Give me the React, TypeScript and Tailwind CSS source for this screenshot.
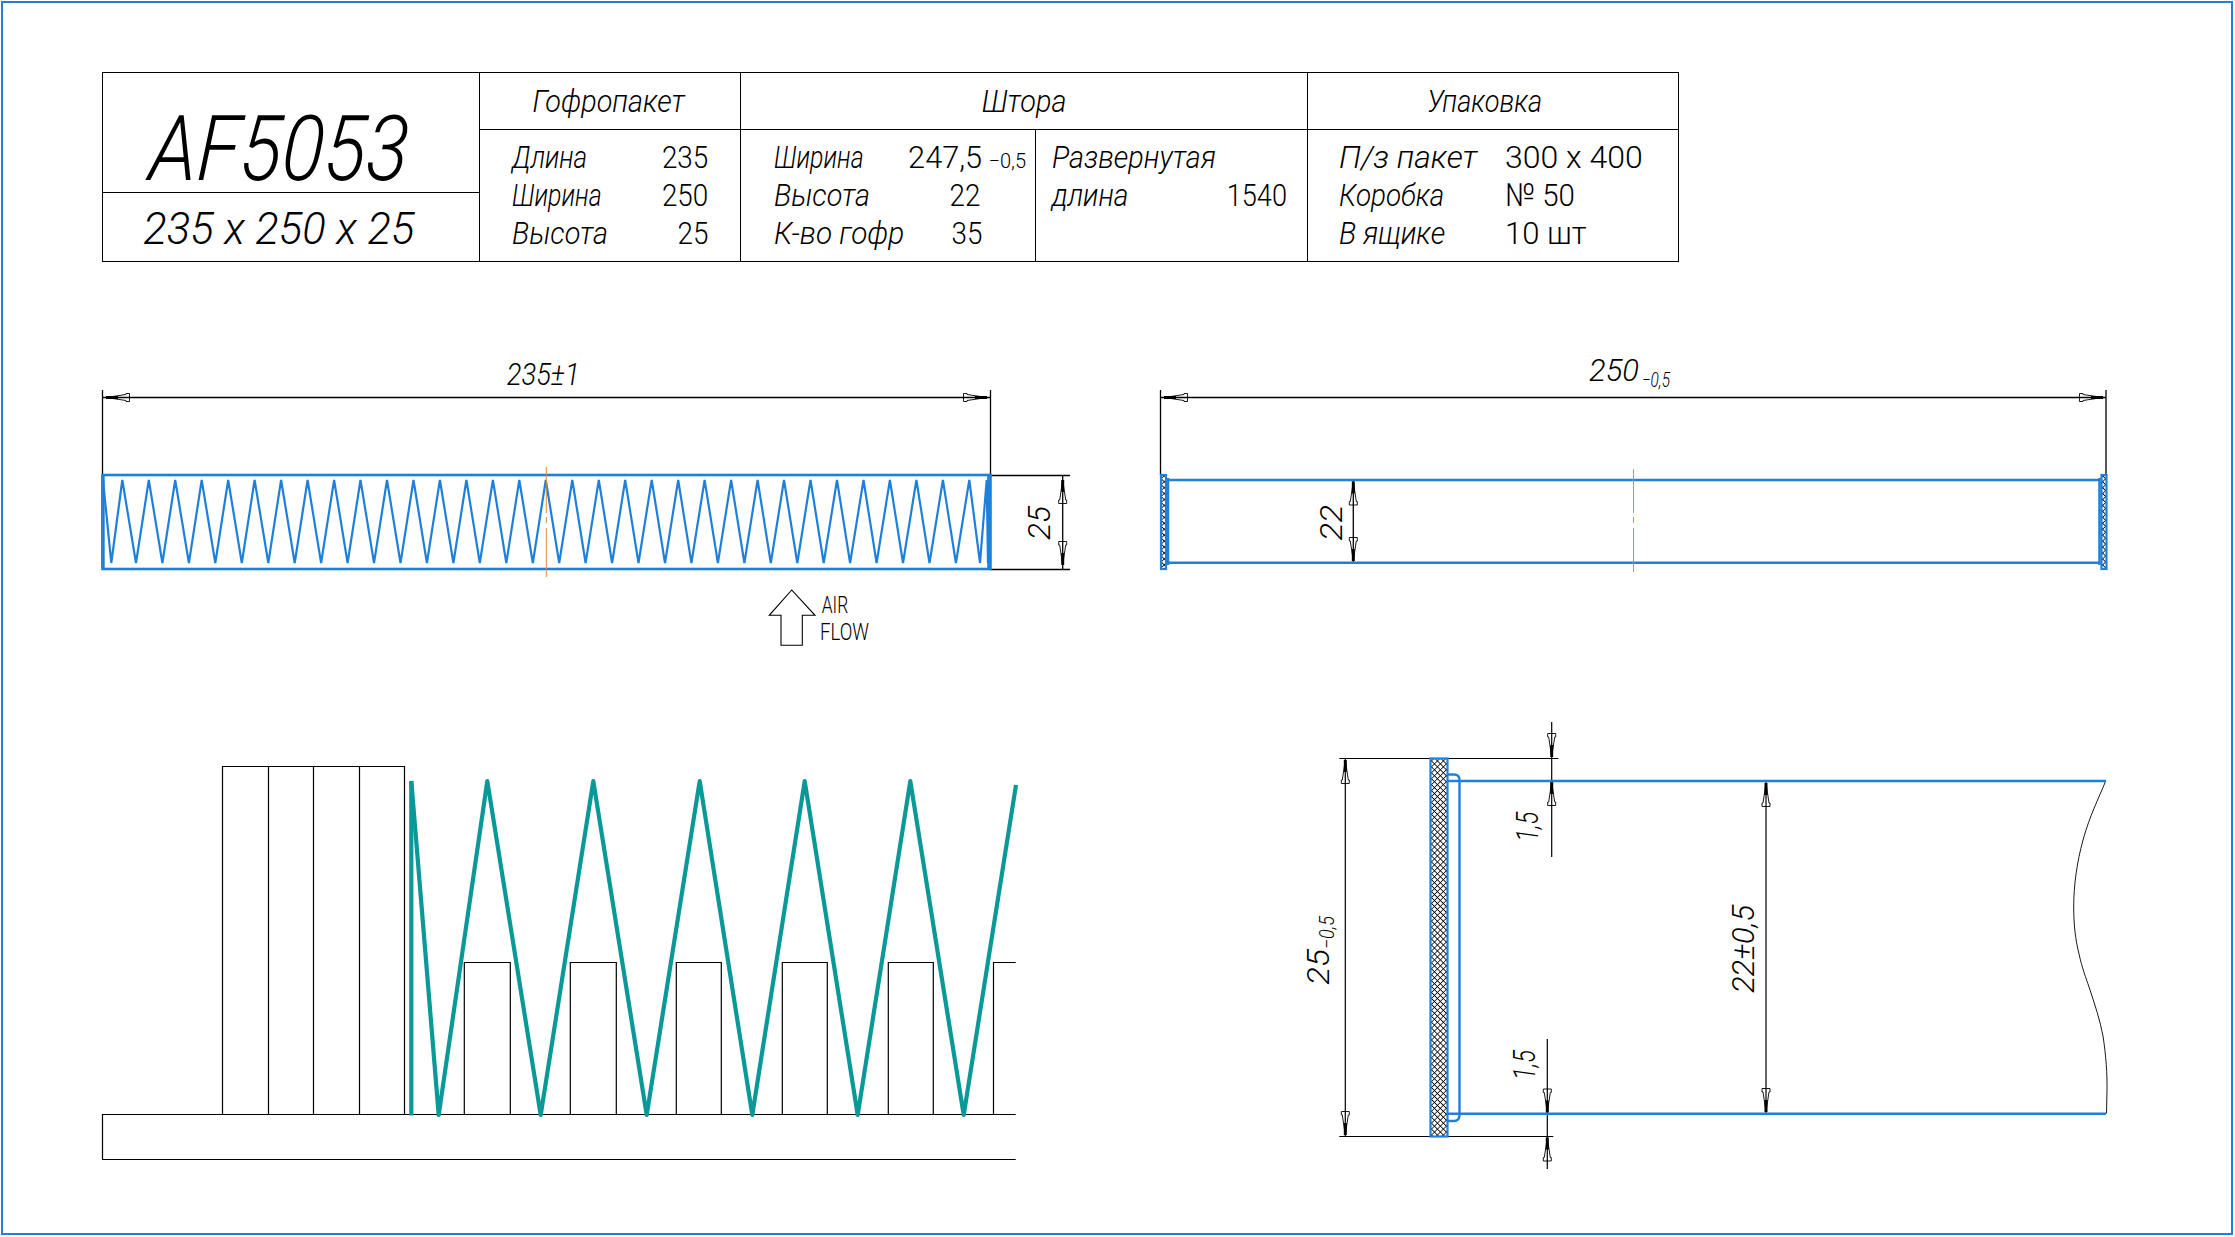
import React from "react";

const BLUE = "#1e80da";
const TEAL = "#0a9898";
const ORANGE = "#e08a3c";
const FONT = "Roboto, 'Noto Sans', sans-serif";

function Arrow({ x, y, angle }: { x: number; y: number; angle: number }) {
  return (
    <g transform={`translate(${x} ${y}) rotate(${angle})`}>
      <path d="M0 0 L20 -3 L20 -4 L23.5 -4 L23.5 4 L20 4 L20 3 Z" fill="none" stroke="#000" strokeWidth="0.9" />
      <path d="M0 0 L12 0" stroke="#000" strokeWidth="3" />
    </g>
  );
}

function T({
  x,
  y,
  len,
  size = 32,
  rot = false,
  italic = true,
  weight = 300,
  children,
}: {
  x: number;
  y: number;
  len: number;
  size?: number;
  rot?: boolean;
  italic?: boolean;
  weight?: number;
  children: React.ReactNode;
}) {
  return (
    <text
      x={x}
      y={y}
      fontFamily={FONT}
      fontSize={size}
      fontWeight={weight}
      fontStyle={italic ? "italic" : "normal"}
      textLength={len}
      lengthAdjust="spacingAndGlyphs"
      fill="#000"
      transform={rot ? `rotate(-90 ${x} ${y})` : undefined}
    >
      {children}
    </text>
  );
}

function Hatch({ id }: { id: string }) {
  return (
    <pattern id={id} width="4.2" height="4.2" patternUnits="userSpaceOnUse" patternTransform="rotate(45)">
      <rect width="4.2" height="4.2" fill="#fff" />
      <path d="M0 0H4.2M0 0V4.2" stroke="#000" strokeWidth="1.5" />
    </pattern>
  );
}

const peaks = Array.from({ length: 33 }, (_, k) => 122.3 + 26.47 * k);
const valleys = Array.from({ length: 32 }, (_, k) => 136 + 26.45 * k);

function zigzagPoints() {
  const pts: string[] = ["103,480", "111.3,563"];
  for (let k = 0; k < 33; k++) {
    pts.push(`${peaks[k].toFixed(1)},480`);
    if (k < 32) pts.push(`${valleys[k].toFixed(1)},563`);
  }
  pts.push("980,563", "986.7,480", "988,563");
  return pts.join(" ");
}

function TopLeftDrawing() {
  return (
    <svg viewBox="90 350 1000 310" width="1000" height="310" className="block shrink-0">
      <g stroke="#000" strokeWidth="1.3" fill="none">
        <path d="M102.5 390V475M990.5 390V475M102.5 397.5H990.5" />
        <path d="M990 475.5H1070M990 569.5H1070M1062.7 475.5V569.5" />
      </g>
      <Arrow x={106} y={397.5} angle={0} />
      <Arrow x={987} y={397.5} angle={180} />
      <Arrow x={1062.7} y={480} angle={90} />
      <Arrow x={1062.7} y={565} angle={-90} />
      <T x={506.7} y={385} len={73}>235±1</T>
      <T x={1050} y={540} len={34} rot>25</T>
      <polyline points={zigzagPoints()} fill="none" stroke={BLUE} strokeWidth="2.2" />
      <rect x="102.5" y="475" width="888" height="94" fill="none" stroke={BLUE} strokeWidth="2.6" />
      <path d="M103 476V568" stroke={BLUE} strokeWidth="3.4" />
      <path d="M989 476V568" stroke={BLUE} strokeWidth="3.6" />
      <path d="M546.3 467V513M546.3 517V523M546.3 528V577" stroke={ORANGE} strokeWidth="1" />
      <path
        d="M791.7 590L769.3 615.3H781V645.3H802.3V615.3H815Z"
        fill="#fff"
        stroke="#000"
        strokeWidth="1.1"
      />
      <T x={821.7} y={613.3} len={26.5} size={23} italic={false}>AIR</T>
      <T x={820} y={640} len={49} size={23} italic={false}>FLOW</T>
    </svg>
  );
}

function TopRightDrawing() {
  return (
    <svg viewBox="1130 350 1000 310" width="1000" height="310" className="block shrink-0">
      <defs>
        <Hatch id="hatch-a" />
      </defs>
      <g stroke="#000" strokeWidth="1.3" fill="none">
        <path d="M1160.5 390V475M2106 390V475M1160.5 397.5H2106" />
        <path d="M1353.3 480V563" />
      </g>
      <Arrow x={1164} y={397.5} angle={0} />
      <Arrow x={2103} y={397.5} angle={180} />
      <Arrow x={1353.3} y={481.5} angle={90} />
      <Arrow x={1353.3} y={561} angle={-90} />
      <T x={1589} y={381} len={50}>250</T>
      <T x={1642} y={387} len={28} size={20}>−0,5</T>
      <T x={1341.7} y={540.7} len={36} rot>22</T>
      <rect x="1161" y="475" width="5" height="94" fill="url(#hatch-a)" stroke={BLUE} strokeWidth="2.2" />
      <rect x="2101.5" y="475" width="5" height="94" fill="url(#hatch-a)" stroke={BLUE} strokeWidth="2.2" />
      <path d="M1168.5 480H2099.5M1168.5 562.7H2099.5" stroke={BLUE} strokeWidth="2.5" fill="none" />
      <path d="M1168 478V565M2099.5 478V565" stroke={BLUE} strokeWidth="2.5" fill="none" />
      <path d="M1633.5 469V513M1633.5 517V523M1633.5 528V572" stroke={ORANGE} strokeWidth="1" />
    </svg>
  );
}

function BottomLeftDrawing() {
  const boxes = [
    [464.3, 510.3],
    [570.3, 616.3],
    [676.3, 721.3],
    [782.3, 827.3],
    [888.3, 933.3],
  ];
  return (
    <svg viewBox="90 700 940 480" width="940" height="480" className="block shrink-0">
      <g stroke="#000" strokeWidth="1.2" fill="none">
        <path d="M1015.7 1114.5H102.5V1159.5H1015.7" />
        <path d="M222.5 1114.5V766.5H404.5V1114.5M268.5 766.5V1114.5M313.5 766.5V1114.5M359.5 766.5V1114.5" />
        {boxes.map(([a, b]) => (
          <path key={a} d={`M${a} 1114.5V962.5H${b}V1114.5`} />
        ))}
        <path d="M993.5 1114.5V962.5H1015.7" />
      </g>
      <path d="M411.3 781V1115.5" stroke={TEAL} strokeWidth="4.2" fill="none" />
      <polyline
        points="411.3,781 438.7,1115 487.3,781 540.7,1115 593.3,781 646.7,1115 699.7,781 752.3,1115 804.7,781 857.7,1115 910.3,781 963.7,1115 1016,785"
        fill="none"
        stroke={TEAL}
        strokeWidth="4.2"
        strokeLinejoin="round"
      />
    </svg>
  );
}

function BottomRightDrawing() {
  return (
    <svg viewBox="1290 700 830 480" width="830" height="480" className="block shrink-0">
      <defs>
        <Hatch id="hatch-b" />
      </defs>
      <g stroke="#000" strokeWidth="1.2" fill="none">
        <path d="M1339.3 758.5H1558.3M1339.3 1136.5H1553.3M1345.3 758.5V1136.5" />
        <path d="M1551.7 722V857M1547.3 1039V1169M1766 781V1113.5" />
        <path d="M2105.8 780.7C2098 800 2090 815 2083 840C2077 862 2073.7 885 2073.7 907C2073.7 925 2075.5 940 2078.8 953C2082 968 2086 978 2089 987C2095 1005 2100 1020 2103 1036C2106 1055 2107.3 1075 2107 1090L2106.5 1113.5" strokeWidth="0.9" />
      </g>
      <Arrow x={1345.3} y={760} angle={90} />
      <Arrow x={1345.3} y={1135} angle={-90} />
      <Arrow x={1551.7} y={757} angle={-90} />
      <Arrow x={1551.7} y={782} angle={90} />
      <Arrow x={1547.3} y={1112.5} angle={-90} />
      <Arrow x={1547.3} y={1137.5} angle={90} />
      <Arrow x={1766} y={783} angle={90} />
      <Arrow x={1766} y={1112} angle={-90} />
      <T x={1329} y={985} len={36} rot>25</T>
      <T x={1334} y={949} len={33} size={20} rot>−0,5</T>
      <T x={1538} y={841.7} len={30} rot>1,5</T>
      <T x={1535} y={1080} len={30} rot>1,5</T>
      <T x={1754} y={993} len={88} rot>22±0,5</T>
      <rect x="1430.5" y="758.5" width="17" height="378" fill="url(#hatch-b)" stroke={BLUE} strokeWidth="2.2" />
      <path
        d="M1448 774.5H1454Q1459.5 774.5 1459.5 780V1115Q1459.5 1121 1454 1121H1448M1448 781H2106M1448 1113.7H2106"
        fill="none"
        stroke={BLUE}
        strokeWidth="2.4"
      />
    </svg>
  );
}

function Row({ children }: { children: React.ReactNode }) {
  return <div className="flex h-[38px] items-center justify-between">{children}</div>;
}

function It({ className, children }: { className: string; children: React.ReactNode }) {
  return <span className={`block origin-left whitespace-nowrap text-[32px] leading-[38px] font-light italic ${className}`}>{children}</span>;
}

function Num({ className, children }: { className: string; children: React.ReactNode }) {
  return <span className={`block whitespace-nowrap text-[32px] leading-[38px] font-light ${className}`}>{children}</span>;
}

function Head({ className, textClass, children }: { className?: string; textClass: string; children: React.ReactNode }) {
  return (
    <div className={`flex h-[57px] items-center justify-center border-b border-black ${className ?? ""}`}>
      <span className={`block whitespace-nowrap text-[32px] leading-[38px] font-light italic ${textClass}`}>{children}</span>
    </div>
  );
}

function SpecTable() {
  return (
    <div className="ml-[99px] mt-[69px] flex h-[190px] w-[1577px] border border-black text-black">
      <div className="flex w-[377px] flex-col border-r border-black">
        <div className="flex h-[120px] items-center justify-center border-b border-black pr-[24px] pt-[34px]">
          <span className="block origin-center scale-x-[0.86] skew-x-[-4deg] whitespace-nowrap text-[91px] leading-none font-light italic">AF5053</span>
        </div>
        <div className="flex flex-1 items-center justify-center pr-[24px] pt-[2px]">
          <span className="block origin-center scale-x-[0.97] whitespace-nowrap text-[45px] leading-none font-light italic">235 x 250 x 25</span>
        </div>
      </div>
      <div className="flex w-[261px] flex-col border-r border-black">
        <Head className="pr-[3px]" textClass="scale-x-[0.9]">Гофропакет</Head>
        <div className="flex-1 pl-[32px] pr-[32px] pt-[8px]">
          <Row><It className="scale-x-[0.82]">Длина</It><Num className="origin-right scale-x-[0.87]">235</Num></Row>
          <Row><It className="scale-x-[0.78]">Ширина</It><Num className="origin-right scale-x-[0.87]">250</Num></Row>
          <Row><It className="scale-x-[0.9]">Высота</It><Num className="origin-right scale-x-[0.87]">25</Num></Row>
        </div>
      </div>
      <div className="flex w-[567px] flex-col border-r border-black">
        <Head textClass="scale-x-[0.9]">Штора</Head>
        <div className="flex flex-1">
          <div className="w-[295px] border-r border-black pl-[33px] pr-[9px] pt-[8px]">
            <Row>
              <It className="scale-x-[0.78]">Ширина</It>
              <span className="flex items-baseline gap-[6px]">
                <Num className="origin-right scale-x-[0.96]">247,5</Num>
                <span className="block origin-left whitespace-nowrap text-[20px] font-light">−0,5</span>
              </span>
            </Row>
            <Row>
              <It className="scale-x-[0.9]">Высота</It>
              <Num className="mr-[46px] origin-right scale-x-[0.87]">22</Num>
            </Row>
            <Row>
              <It className="scale-x-[0.93]">К-во гофр</It>
              <Num className="mr-[44px] origin-right scale-x-[0.87]">35</Num>
            </Row>
          </div>
          <div className="flex-1 pl-[16px] pr-[20px] pt-[8px]">
            <Row><It className="scale-x-[0.9]">Развернутая</It></Row>
            <Row><It className="scale-x-[0.88]">длина</It><Num className="origin-right scale-x-[0.85]">1540</Num></Row>
          </div>
        </div>
      </div>
      <div className="flex flex-1 flex-col">
        <Head className="pr-[16px]" textClass="scale-x-[0.85]">Упаковка</Head>
        <div className="grid flex-1 auto-rows-[38px] grid-cols-[166px_1fr] pl-[31px] pt-[8px]">
          <It className="">П/з пакет</It>
          <Num className="origin-left">300 x 400</Num>
          <It className="scale-x-[0.87]">Коробка</It>
          <Num className="origin-left scale-x-[0.92]">№ 50</Num>
          <It className="scale-x-[0.9]">В ящике</It>
          <Num className="origin-left scale-x-[0.97]">10 шт</Num>
        </div>
      </div>
    </div>
  );
}

export default function App() {
  return (
    <div className="h-[1237px] w-[2235px] overflow-hidden bg-white font-['Roboto','Noto_Sans',sans-serif]">
      <div className="ml-px mt-px h-[1234px] w-[2232px] border-2 border-[#1e80da]">
        <SpecTable />
        <div className="ml-[87px] mt-[88px] flex gap-[40px]">
          <TopLeftDrawing />
          <TopRightDrawing />
        </div>
        <div className="ml-[87px] mt-[40px] flex gap-[260px]">
          <BottomLeftDrawing />
          <BottomRightDrawing />
        </div>
      </div>
    </div>
  );
}
